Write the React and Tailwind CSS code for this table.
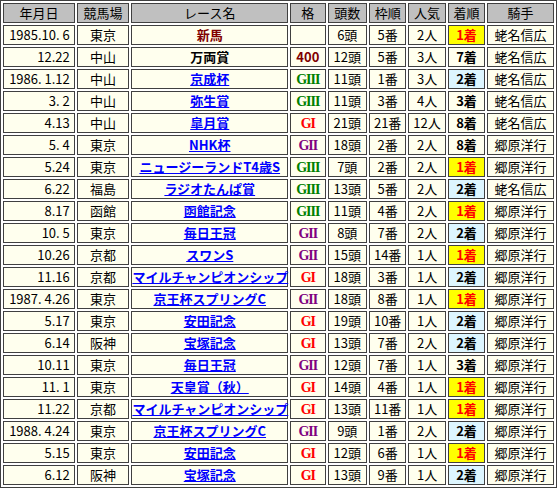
import React from "react"

const rows = [
  ["1985.10. 6", "東京", "新馬", "maroon", "", "6頭", "5番", "2人", "1着", "蛯名信広"],
  ["12.22", "中山", "万両賞", "black", "400", "12頭", "5番", "3人", "7着", "蛯名信広"],
  ["1986. 1.12", "中山", "京成杯", "link", "GIII", "11頭", "1番", "3人", "2着", "蛯名信広"],
  ["3. 2", "中山", "弥生賞", "link", "GIII", "11頭", "3番", "4人", "3着", "蛯名信広"],
  ["4.13", "中山", "皐月賞", "link", "GI", "21頭", "21番", "12人", "8着", "蛯名信広"],
  ["5. 4", "東京", "NHK杯", "link", "GII", "18頭", "2番", "2人", "8着", "郷原洋行"],
  ["5.24", "東京", "ニュージーランドT4歳S", "link", "GIII", "7頭", "2番", "2人", "1着", "郷原洋行"],
  ["6.22", "福島", "ラジオたんぱ賞", "link", "GIII", "13頭", "5番", "2人", "2着", "蛯名信広"],
  ["8.17", "函館", "函館記念", "link", "GIII", "11頭", "4番", "2人", "1着", "郷原洋行"],
  ["10. 5", "東京", "毎日王冠", "link", "GII", "8頭", "7番", "2人", "2着", "郷原洋行"],
  ["10.26", "京都", "スワンS", "link", "GII", "15頭", "14番", "1人", "1着", "郷原洋行"],
  ["11.16", "京都", "マイルチャンピオンシップ", "link", "GI", "18頭", "3番", "1人", "2着", "郷原洋行"],
  ["1987. 4.26", "東京", "京王杯スプリングC", "link", "GII", "18頭", "8番", "1人", "1着", "郷原洋行"],
  ["5.17", "東京", "安田記念", "link", "GI", "19頭", "10番", "1人", "2着", "郷原洋行"],
  ["6.14", "阪神", "宝塚記念", "link", "GI", "13頭", "7番", "2人", "2着", "郷原洋行"],
  ["10.11", "東京", "毎日王冠", "link", "GII", "12頭", "7番", "1人", "3着", "郷原洋行"],
  ["11. 1", "東京", "天皇賞（秋）", "link", "GI", "14頭", "4番", "1人", "1着", "郷原洋行"],
  ["11.22", "京都", "マイルチャンピオンシップ", "link", "GI", "13頭", "11番", "1人", "1着", "郷原洋行"],
  ["1988. 4.24", "東京", "京王杯スプリングC", "link", "GII", "9頭", "1番", "2人", "2着", "郷原洋行"],
  ["5.15", "東京", "安田記念", "link", "GI", "12頭", "6番", "1人", "1着", "郷原洋行"],
  ["6.12", "阪神", "宝塚記念", "link", "GI", "13頭", "9番", "1人", "2着", "郷原洋行"],
]

const headers = [
  ["年月日", "w-[71px]"],
  ["競馬場", "w-[52px]"],
  ["レース名", "w-[155px]"],
  ["格", "w-[35px]"],
  ["頭数", "w-[39px]"],
  ["枠順", "w-[37px]"],
  ["人気", "w-[37px]"],
  ["着順", "w-[37px]"],
  ["騎手", "w-[66px]"],
]

const td = "h-[20px] border border-[#404040] bg-[#ffffee] p-0 align-middle"

// fixed-height box so mixed fonts can't stretch the row
const Box = ({ className = "", children }) => (
  <div className={`h-[18px] overflow-visible whitespace-nowrap text-center leading-[18px] ${className}`}>
    {children}
  </div>
)

const Grade = ({ g }) => {
  if (!g) return null
  if (g === "400") return <span className="font-bold text-[#800000]">400</span>
  const color = { GI: "text-[#ff0000]", GII: "text-[#800080]", GIII: "text-[#008000]" }[g]
  return (
    <span className={`font-['Liberation_Serif',serif] text-[14px] leading-[18px] font-bold tracking-[-1px] ${color}`}>
      {g}
    </span>
  )
}

const RaceName = ({ name, kind }) => {
  if (kind === "link") {
    return (
      <a href="#" className="font-bold text-[#0000ff] underline">
        {name}
      </a>
    )
  }
  if (kind === "maroon") return <span className="font-bold text-[#800000]">{name}</span>
  return <span className="font-bold text-black">{name}</span>
}

const Rank = ({ r }) => {
  if (r === "1着")
    return (
      <td className={`${td} !bg-[#ffff00]`}>
        <Box className="font-bold text-[#ff0000]">{r}</Box>
      </td>
    )
  if (r === "2着")
    return (
      <td className={`${td} !bg-[#ddf6ff]`}>
        <Box className="font-bold">{r}</Box>
      </td>
    )
  return (
    <td className={td}>
      <Box className="font-bold">{r}</Box>
    </td>
  )
}

export default function App() {
  return (
    <div className="min-h-screen bg-white font-['Noto_Sans_CJK_JP',sans-serif] text-[13px] text-black">
      <table className="w-[557px] table-fixed border-separate border-spacing-[2px] border border-[#404040] bg-white">
        <thead>
          <tr>
            {headers.map(([h, w]) => (
              <th key={h} className={`${w} h-[20px] border border-[#404040] bg-[#c0c0c0] p-0 font-normal`}>
                <Box>{h}</Box>
              </th>
            ))}
          </tr>
        </thead>
        <tbody>
          {rows.map((r, i) => (
            <tr key={i}>
              <td className={td}>
                <Box className="!text-right whitespace-pre pr-1">{r[0]}</Box>
              </td>
              <td className={td}>
                <Box>{r[1]}</Box>
              </td>
              <td className={td}>
                <Box>
                  <RaceName name={r[2]} kind={r[3]} />
                </Box>
              </td>
              <td className={td}>
                <Box>
                  <Grade g={r[4]} />
                </Box>
              </td>
              <td className={td}>
                <Box>{r[5]}</Box>
              </td>
              <td className={td}>
                <Box>{r[6]}</Box>
              </td>
              <td className={td}>
                <Box>{r[7]}</Box>
              </td>
              <Rank r={r[8]} />
              <td className={td}>
                <Box>{r[9]}</Box>
              </td>
            </tr>
          ))}
        </tbody>
      </table>
    </div>
  )
}
